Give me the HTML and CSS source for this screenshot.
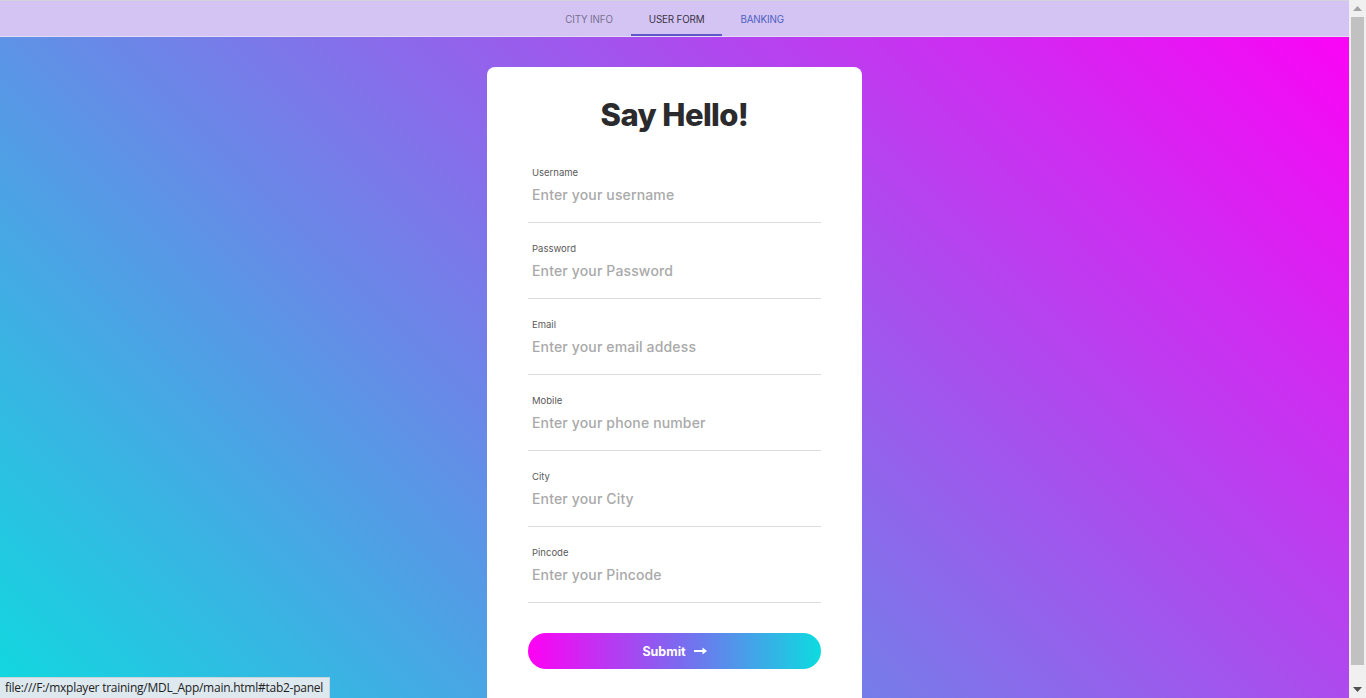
FILE: index.html
```html
<!DOCTYPE html>
<html lang="en">
<head>
<meta charset="utf-8">
<title>MDL App</title>
<link rel="stylesheet" href="styles.css">
</head>
<body>
<div class="page">
  <header class="topbar">
    <nav class="tabs">
      <a class="tab" href="#tab1-panel">City Info</a>
      <a class="tab is-active" href="#tab2-panel">User Form</a>
      <a class="tab tab-link" href="#tab3-panel">Banking</a>
    </nav>
  </header>
  <main class="content">
    <form class="card">
      <h1 class="title">Say Hello!</h1>
      <div class="fields">
        <label class="field">
          <span class="field-label">Username</span>
          <input class="field-input" type="text" placeholder="Enter your username">
        </label>
        <label class="field">
          <span class="field-label">Password</span>
          <input class="field-input" type="password" placeholder="Enter your Password">
        </label>
        <label class="field">
          <span class="field-label">Email</span>
          <input class="field-input" type="text" placeholder="Enter your email addess">
        </label>
        <label class="field">
          <span class="field-label">Mobile</span>
          <input class="field-input" type="text" placeholder="Enter your phone number">
        </label>
        <label class="field">
          <span class="field-label">City</span>
          <input class="field-input" type="text" placeholder="Enter your City">
        </label>
        <label class="field">
          <span class="field-label">Pincode</span>
          <input class="field-input" type="text" placeholder="Enter your Pincode">
        </label>
      </div>
      <button class="submit" type="button">
        <span>Submit</span>
        <svg class="arrow" width="13" height="8" viewBox="0 0 13 8" aria-hidden="true">
          <path d="M0 3h8.5V0.5L13 4 8.5 7.5V5H0z" fill="#fff"/>
        </svg>
      </button>
    </form>
  </main>
</div>
<div class="scrollbar" aria-hidden="true">
  <div class="sb-btn">
    <svg width="9" height="5" viewBox="0 0 9 5"><path d="M0 5L4.5 0 9 5z" fill="#a3a3a3"/></svg>
  </div>
  <div class="sb-track"><div class="sb-thumb"></div></div>
  <div class="sb-btn">
    <svg width="9" height="5" viewBox="0 0 9 5"><path d="M0 0L4.5 5 9 0z" fill="#505050"/></svg>
  </div>
</div>
<div class="status">file:///F:/mxplayer training/MDL_App/main.html#tab2-panel</div>
</body>
</html>
```
FILE: styles.css
```css
html, body {
  height: 100%;
  overflow: hidden;
}
body {
  margin: 0;
  display: flex;
  font-family: Inter, "Open Sans", sans-serif;
  color: #333;
  background: #f0f0f0;
}
.page {
  flex: 1;
  min-width: 0;
  height: 100%;
  overflow: hidden;
  background: linear-gradient(45deg, #10d9df 0%, #ff00f6 100%);
}
.scrollbar {
  width: 17px;
  flex: none;
  height: 100%;
  display: flex;
  flex-direction: column;
  background: #f0f0f0;
}
.sb-btn {
  height: 17px;
  flex: none;
  display: flex;
  align-items: center;
  justify-content: center;
}
.sb-track {
  flex: 1;
  padding: 0 2px 16px;
  display: flex;
}
.sb-thumb {
  flex: 1;
  background: #c1c1c1;
}
.topbar {
  height: 35px;
  background: #d3c4f3;
  border-top: 1px solid #d6d3de;
  border-bottom: 1px solid #e4dcf4;
  display: flex;
  justify-content: center;
}
.tabs {
  display: flex;
  height: 100%;
}
.tab {
  display: flex;
  align-items: center;
  padding: 2px 18px 0;
  font-size: 9.8px;
  text-transform: uppercase;
  text-decoration: none;
  color: #7a7190;
  letter-spacing: -0.15px;
}
.tab.is-active {
  color: #3a3346;
  box-shadow: inset 0 -2px 0 #5f57c9;
}
.tab.tab-link {
  color: #4f5fc0;
}
.content {
  display: flex;
  justify-content: center;
  padding: 30px 0 20px;
}
.card {
  width: 293px;
  padding: 28px 41px 50px;
  background: #fff;
  border-radius: 8px;
}
.title {
  margin: 0;
  height: 40px;
  line-height: 40px;
  text-align: center;
  font-size: 31px;
  font-weight: 800;
  letter-spacing: -0.6px;
  color: #2b2a2c;
}
.fields {
  margin-top: 31px;
  display: flex;
  flex-direction: column;
  gap: 19px;
}
.field {
  display: flex;
  flex-direction: column;
  padding-bottom: 16px;
  border-bottom: 1px solid #dcdcdc;
}
.field-label {
  padding-left: 4px;
  font-size: 9.5px;
  line-height: 14px;
  color: #5a5a5a;
}
.field-input {
  margin-top: 2px;
  height: 24px;
  padding: 0 0 0 4px;
  border: none;
  outline: none;
  background: transparent;
  font-family: inherit;
  font-size: 14px;
  font-weight: 500;
  letter-spacing: 0.15px;
  color: #333;
}
.field-input::placeholder {
  color: #a9a9a9;
}
.submit {
  margin-top: 30px;
  width: 100%;
  height: 36px;
  border: none;
  border-radius: 18px;
  background: linear-gradient(90deg, #ff00f4 0%, #7b6af0 52%, #0ddbe0 100%);
  color: #fff;
  font-family: inherit;
  font-size: 12.5px;
  font-weight: 700;
  display: flex;
  align-items: center;
  justify-content: center;
  gap: 8px;
  cursor: pointer;
}
.arrow {
  display: block;
}
.status {
  position: fixed;
  left: 0;
  bottom: 0;
  height: 20px;
  padding: 0 6px 0 5px;
  background: #dde8ef;
  border-top: 1px solid #c9d5dd;
  border-right: 1px solid #c9d5dd;
  font-family: "Open Sans", "DejaVu Sans", sans-serif;
  font-size: 12px;
  line-height: 20px;
  color: #222;
  letter-spacing: -0.25px;
}
```
